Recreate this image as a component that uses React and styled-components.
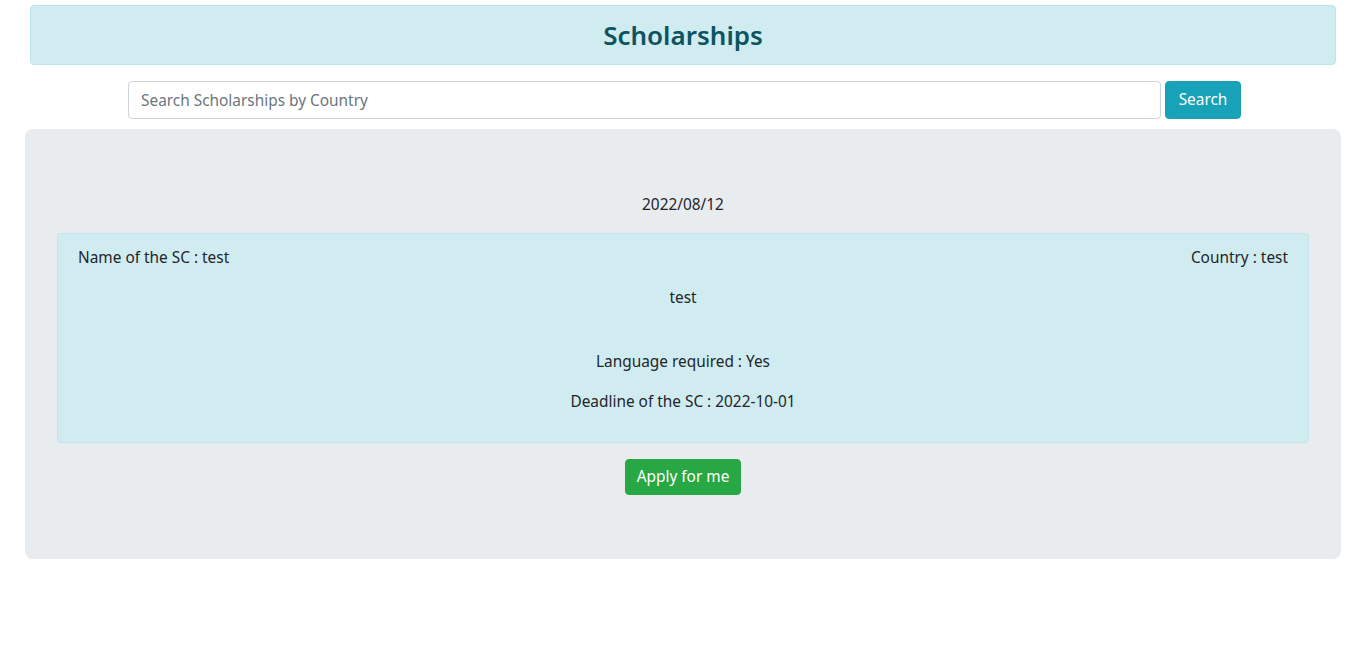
import styled, { createGlobalStyle } from 'styled-components'

const GlobalStyle = createGlobalStyle`
  body {
    margin: 0;
    font-family: "Noto Sans", "Open Sans", sans-serif;
    font-size: 15.4px;
    line-height: 24px;
    color: #212529;
    background: #fff;
  }
  * { box-sizing: border-box; }
`

const Page = styled.div`
  padding: 5px 25px 0 25px;
`

const Header = styled.div`
  margin: 0 5px;
  padding: 12px 20px;
  background: #d1ecf1;
  border: 1px solid #bee5eb;
  border-radius: 4px;
  color: #0c5460;
  text-align: center;
`

const Title = styled.h3`
  margin: 0;
  font-size: 26px;
  font-weight: 600;
  line-height: 34px;
`

const SearchRow = styled.form`
  display: flex;
  justify-content: center;
  gap: 4px;
  margin: 16px 0 10px 3px;
`

const SearchInput = styled.input`
  width: 1033px;
  height: 38px;
  padding: 6px 12px;
  font: inherit;
  color: #495057;
  border: 1px solid #ced4da;
  border-radius: 4px;
  &::placeholder {
    color: #6c757d;
  }
`

const Button = styled.button`
  width: ${p => p.$w}px;
  height: ${p => p.$h || 38}px;
  padding: 0;
  font: inherit;
  color: #fff;
  background: ${p => p.$color};
  border: 1px solid ${p => p.$color};
  border-radius: 4px;
  cursor: pointer;
`

const Jumbotron = styled.div`
  padding: 64px 32px;
  background: #e9ecef;
  border-radius: 8px;
  text-align: center;
`

const Text = styled.p`
  margin: 0 0 16px 0;
`

const Spacer = styled.div`
  height: 24px;
`

const Card = styled.div`
  margin-bottom: 16px;
  padding: 12px 20px;
  background: #d1ecf1;
  border: 1px solid #bee5eb;
  border-radius: 4px;
  color: #212529;
`

const Row = styled.div`
  display: flex;
  justify-content: space-between;
  margin-bottom: 16px;
`

export default function App() {
  return (
    <Page>
      <GlobalStyle />
      <Header>
        <Title>Scholarships</Title>
      </Header>
      <SearchRow onSubmit={e => e.preventDefault()}>
        <SearchInput placeholder="Search Scholarships by Country" />
        <Button $color="#17a2b8" $w={76}>Search</Button>
      </SearchRow>
      <Jumbotron>
        <Text>2022/08/12</Text>
        <Card>
          <Row>
            <span>Name of the SC : test</span>
            <span>Country : test</span>
          </Row>
          <Text>test</Text>
          <Spacer />
          <Text>Language required : Yes</Text>
          <Text>Deadline of the SC : 2022-10-01</Text>
        </Card>
        <Button $color="#28a745" $w={116} $h={36}>Apply for me</Button>
      </Jumbotron>
    </Page>
  )
}
